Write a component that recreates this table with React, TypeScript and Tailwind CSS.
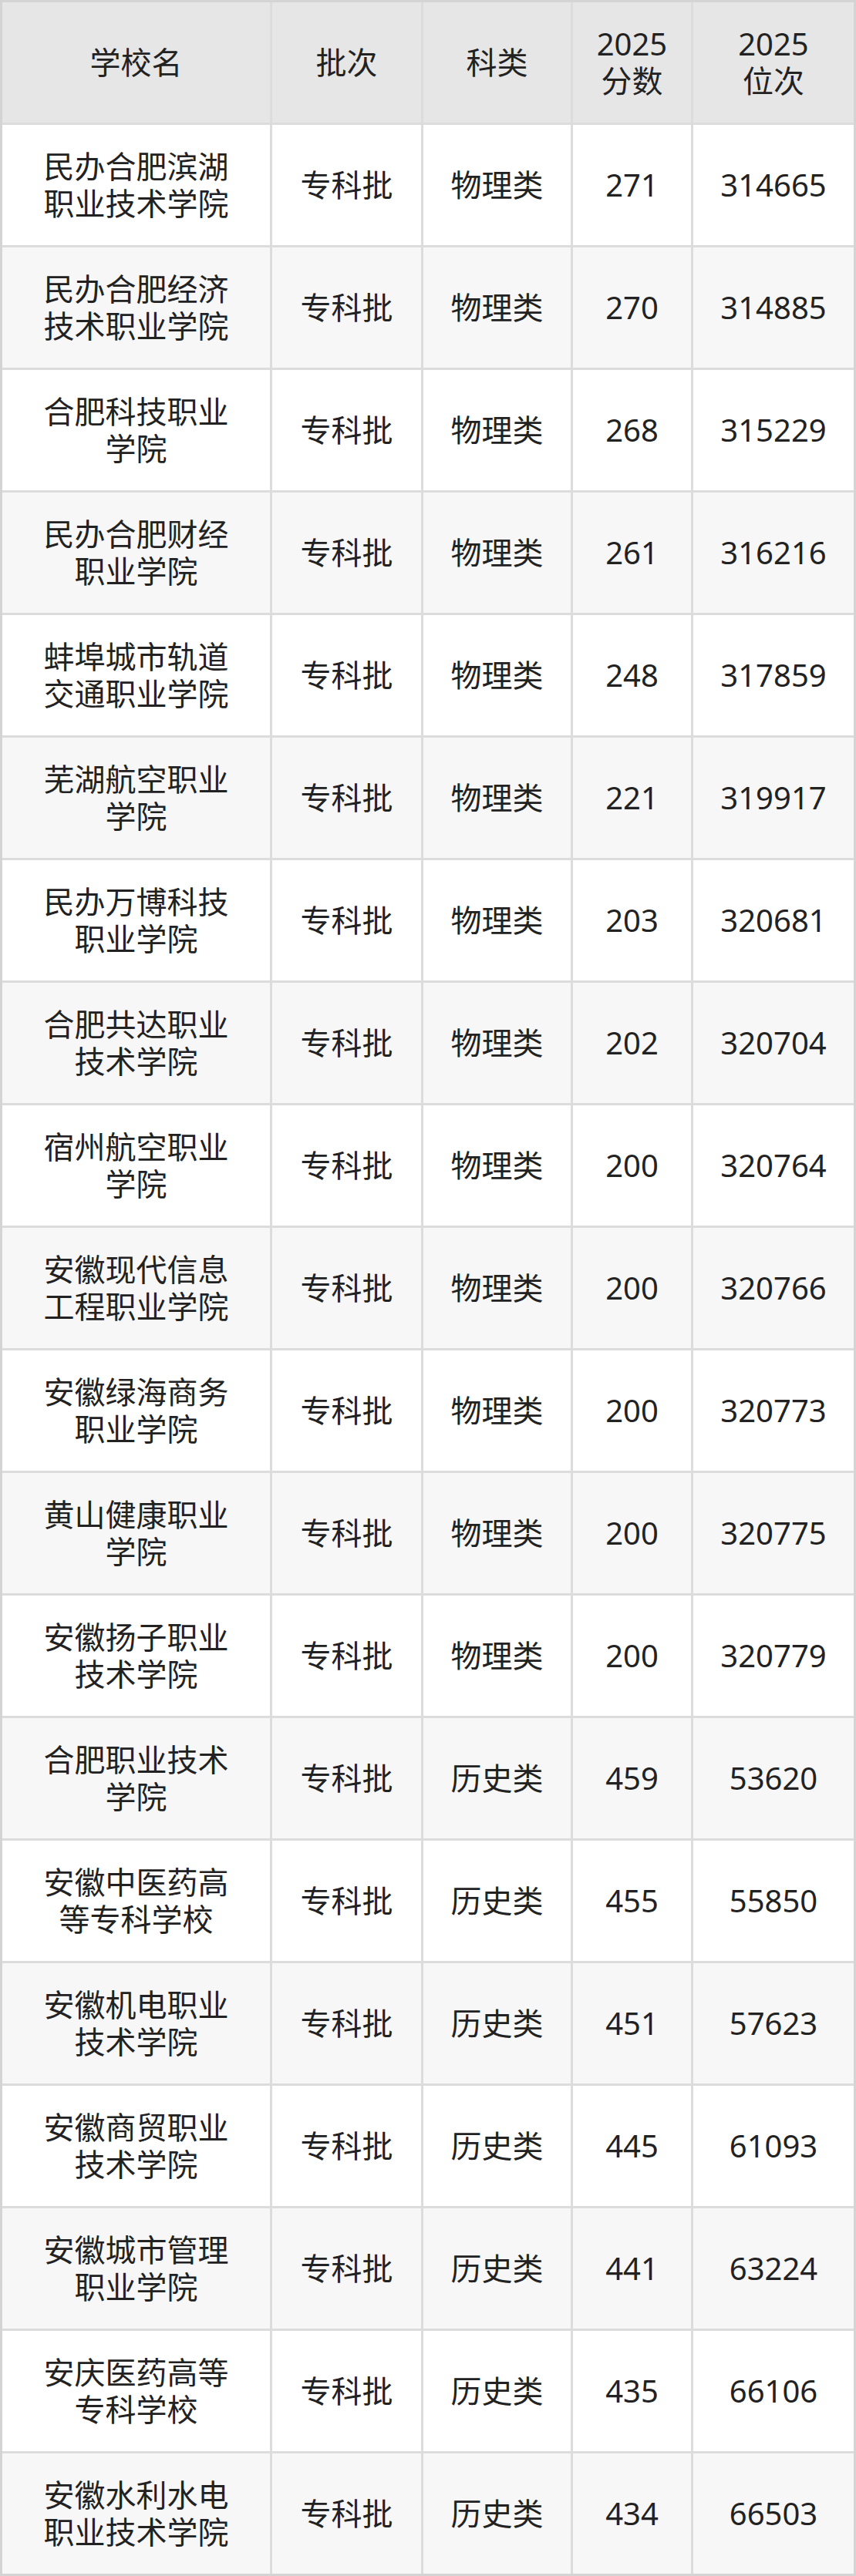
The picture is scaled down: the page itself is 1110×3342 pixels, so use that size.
import React from 'react';

type Row = { name: string; batch: string; kind: string; score: number; rank: number };

const rows: Row[] = [
  { name: '民办合肥滨湖|职业技术学院', batch: '专科批', kind: '物理类', score: 271, rank: 314665 },
  { name: '民办合肥经济|技术职业学院', batch: '专科批', kind: '物理类', score: 270, rank: 314885 },
  { name: '合肥科技职业|学院', batch: '专科批', kind: '物理类', score: 268, rank: 315229 },
  { name: '民办合肥财经|职业学院', batch: '专科批', kind: '物理类', score: 261, rank: 316216 },
  { name: '蚌埠城市轨道|交通职业学院', batch: '专科批', kind: '物理类', score: 248, rank: 317859 },
  { name: '芜湖航空职业|学院', batch: '专科批', kind: '物理类', score: 221, rank: 319917 },
  { name: '民办万博科技|职业学院', batch: '专科批', kind: '物理类', score: 203, rank: 320681 },
  { name: '合肥共达职业|技术学院', batch: '专科批', kind: '物理类', score: 202, rank: 320704 },
  { name: '宿州航空职业|学院', batch: '专科批', kind: '物理类', score: 200, rank: 320764 },
  { name: '安徽现代信息|工程职业学院', batch: '专科批', kind: '物理类', score: 200, rank: 320766 },
  { name: '安徽绿海商务|职业学院', batch: '专科批', kind: '物理类', score: 200, rank: 320773 },
  { name: '黄山健康职业|学院', batch: '专科批', kind: '物理类', score: 200, rank: 320775 },
  { name: '安徽扬子职业|技术学院', batch: '专科批', kind: '物理类', score: 200, rank: 320779 },
  { name: '合肥职业技术|学院', batch: '专科批', kind: '历史类', score: 459, rank: 53620 },
  { name: '安徽中医药高|等专科学校', batch: '专科批', kind: '历史类', score: 455, rank: 55850 },
  { name: '安徽机电职业|技术学院', batch: '专科批', kind: '历史类', score: 451, rank: 57623 },
  { name: '安徽商贸职业|技术学院', batch: '专科批', kind: '历史类', score: 445, rank: 61093 },
  { name: '安徽城市管理|职业学院', batch: '专科批', kind: '历史类', score: 441, rank: 63224 },
  { name: '安庆医药高等|专科学校', batch: '专科批', kind: '历史类', score: 435, rank: 66106 },
  { name: '安徽水利水电|职业技术学院', batch: '专科批', kind: '历史类', score: 434, rank: 66503 },
];

const Lines: React.FC<{ text: string }> = ({ text }) => (
  <>
    {text.split('|').map((line, i) => (
      <span key={i} className="block">
        {line}
      </span>
    ))}
  </>
);

const Cell: React.FC<{ bg: string; children: React.ReactNode }> = ({ bg, children }) => (
  <div className={`${bg} flex items-center justify-center text-center`}>
    <div>{children}</div>
  </div>
);

export default function App() {
  return (
    <div
      className="w-[1110px] bg-[#d4d4d4] p-[3px] text-[40px] leading-[48px] text-[#222222]"
      style={{ fontFamily: '"Noto Sans", "Noto Sans CJK SC", sans-serif' }}
    >
      <div className="grid grid-cols-[347px_193px_191px_153px_208px] auto-rows-[156px] gap-[3px] bg-[#dcdcdc]">
        {/* Header */}
        <Cell bg="bg-[#e6e6e6]">学校名</Cell>
        <Cell bg="bg-[#e6e6e6]">批次</Cell>
        <Cell bg="bg-[#e6e6e6]">科类</Cell>
        <Cell bg="bg-[#e6e6e6]">
          <Lines text="2025|分数" />
        </Cell>
        <Cell bg="bg-[#e6e6e6]">
          <Lines text="2025|位次" />
        </Cell>

        {rows.map((r, i) => {
          const bg = i % 2 === 0 ? 'bg-white' : 'bg-[#f7f7f7]';
          return (
            <React.Fragment key={i}>
              <Cell bg={bg}>
                <Lines text={r.name} />
              </Cell>
              <Cell bg={bg}>{r.batch}</Cell>
              <Cell bg={bg}>{r.kind}</Cell>
              <Cell bg={bg}>{r.score}</Cell>
              <Cell bg={bg}>{r.rank}</Cell>
            </React.Fragment>
          );
        })}
      </div>
    </div>
  );
}
